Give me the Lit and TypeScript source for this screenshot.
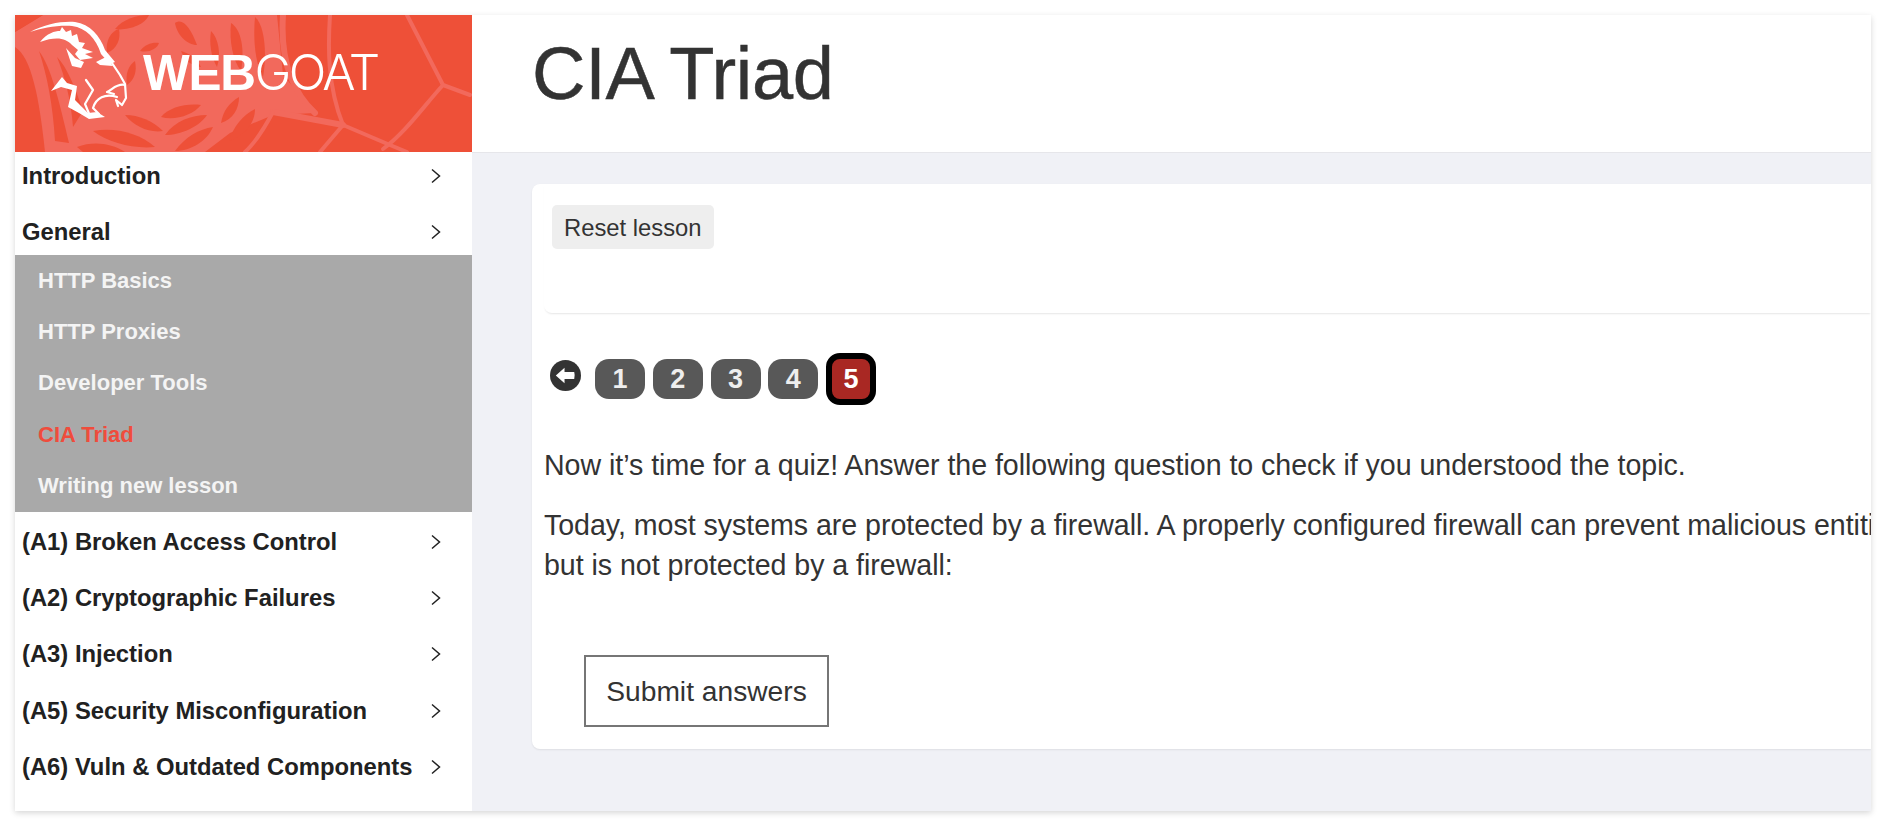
import { LitElement, html, css, svg } from "lit";
import { customElement } from "lit/decorators.js";

const L = "#f2695c";
const web = svg`
  <path fill="${L}" d="M0 17 L28 0 H262 L268 60 L300 98 L258 100 L215 118 L190 137 H0 Z"/>
  <g fill="none" stroke="${L}" stroke-linecap="round" stroke-linejoin="round">
    <path stroke-width="4" d="M392 0 L428 70 L455 80"/>
    <path stroke-width="4" d="M428 70 C408 92 390 118 368 134"/>
    <path stroke-width="4" d="M315 0 C313 30 312 70 328 110"/>
    <path stroke-width="4" d="M328 110 L305 137"/>
    <path stroke-width="4" d="M328 110 L375 130 L392 137"/>
    <path stroke-width="6" d="M258 97 L328 110"/>
    <path stroke-width="6" d="M268 0 C266 30 270 70 300 98"/>
    <path stroke-width="4" d="M230 137 C240 128 250 112 258 97"/>
  </g>
  <g fill="#ee5038">
    <path d="M0 32 C16 42 24 80 30 137 L0 137 Z"/>
    <path d="M24 36 C36 52 44 85 54 128 L40 126 C38 90 32 60 24 36 Z"/>
    <path d="M42 42 C52 52 60 72 68 96 L58 112 C56 85 50 62 42 42 Z"/>
    <path d="M0 0 H28 L0 17 Z"/>
    <path d="M100 14 C108 4 122 0 134 0 C130 10 112 16 100 14 Z"/>
    <path d="M92 38 C90 26 96 16 104 14 C106 24 102 34 92 38 Z"/>
    <path d="M125 36 C130 29 138 27 144 28 C142 34 134 38 125 36 Z"/>
    <path d="M160 8 C168 2 176 14 182 30 C172 30 162 20 160 8 Z"/>
    <path d="M166 36 C174 38 182 44 186 52 C178 52 170 46 166 36 Z"/>
    <path d="M112 70 C110 58 114 50 120 46 C122 56 120 64 112 70 Z"/>
    <path d="M216 8 C226 14 230 34 226 56 C218 46 214 26 216 8 Z"/>
    <path d="M240 2 C250 10 252 40 248 62 C240 48 238 24 240 2 Z"/>
    <path d="M196 16 C204 24 206 40 202 52 C196 42 194 28 196 16 Z"/>
    <path d="M146 102 C154 92 172 88 186 90 C178 100 160 106 146 102 Z"/>
    <path d="M150 120 C160 106 176 100 192 100 C184 112 166 120 150 120 Z"/>
    <path d="M160 136 C170 122 184 114 198 112 C192 126 176 136 160 136 Z"/>
    <path d="M206 108 C208 96 214 88 224 82 C224 94 218 104 206 108 Z"/>
    <path d="M214 126 C218 112 228 100 240 94 C240 108 230 120 214 126 Z"/>
    <path d="M110 100 C124 100 138 106 148 116 C134 118 120 112 110 100 Z"/>
    <path d="M78 116 C100 112 124 118 140 132 C118 134 94 128 78 116 Z"/>
    <path d="M62 132 C78 126 96 128 110 137 H68 Z"/>
  </g>`;

const goat = svg`
  <g fill="#fff">
    <path d="M30 32 C45 24 62 21 75 22 C90 24 100 36 105 50 L115 62 L110 64 L101 54 C96 38 86 28 72 26 C58 25 42 28 30 32 Z"/>
    <path d="M40 42 C47 33 55 31 60 31 L62 27 L66 32 L71 30 L72 36 L77 34 L79 42 L85 43 L82 48 L93 52 L85 54 L93 58 L80 60 L75 54 L78 50 L72 45 C66 38 56 36 40 42 Z"/>
    <path d="M66 48 L75 58 L84 62 L81 68 L72 66 Z"/>
    <path d="M96 62 L106 57 L113 66 L100 65 Z"/>
    <path d="M62 77 L51 91 L61 87 L72 90 L68 107 L79 113 L89 119 L105 117 L97 112 L88 113 L78 103 L75 100 L77 86 L67 83 Z"/>
  </g>
  <g fill="none" stroke="#fff" stroke-width="2.2" stroke-linejoin="round" stroke-linecap="round">
    <path d="M112 63 L120 75 L125 84 L126 98 L122 105 L116 100 L118 106"/>
    <path d="M125 85 C117 83 112 90 107 92 L114 94"/>
    <path d="M86 80 L93 90 L85 104 L90 116"/>
    <path d="M117 97 C105 93 96 98 93 108 L99 114"/>
  </g>`;

const icon = html`<svg class="chev" viewBox="0 0 16 16"><path d="M5 1.5 L12.5 8 L5 14.5" fill="none" stroke="#212121" stroke-width="1.5"/></svg>`;

@customElement("app-root")
export class AppRoot extends LitElement {
  static styles = css`
    :host { display: block; width: 1886px; height: 826px; background: #fff; overflow: hidden; font-family: "Liberation Sans", Arial, sans-serif; }
    * { box-sizing: border-box; }
    .outer { padding: 15px; height: 826px; }
    .win { display: flex; height: 796px; background: #fff; box-shadow: 0 2px 6px rgba(0,0,0,.16); overflow: hidden; }
    .side { width: 457px; flex: none; background: #fff; }
    .logo { height: 137px; background: #ee5038; position: relative; overflow: hidden; display: flex; align-items: center; padding-bottom: 24px; }
    .logo svg.bg { position: absolute; inset: 0; width: 457px; height: 137px; }
    .logo svg.goat { position: absolute; left: 0; top: 0; width: 140px; height: 137px; }
    .brand { position: relative; margin-left: 128px; font-size: 49.5px; color: #fff; letter-spacing: -1.3px; white-space: nowrap; }
    .brand b { font-weight: 700; }
    .brand span { font-family: Inter, "Liberation Sans", sans-serif; font-weight: 300; letter-spacing: -2.6px; }
    .item { height: 56.2px; padding-left: 7px; padding-right: 29px; display: flex; align-items: center; justify-content: space-between; font-size: 23.8px; font-weight: 700; color: #212121; white-space: nowrap; }
    .item.first { height: 48px; margin-bottom: 8px; }
    .item.gen { height: 47px; }
    .chev { width: 16px; height: 16px; flex: none; }
    .sub { background: #a9a9a9; padding-left: 23px; height: 257px; display: flex; flex-direction: column; margin-bottom: 2px; }
    .sub div { height: 51.4px; display: flex; align-items: center; font-size: 22px; font-weight: 700; color: #f4f4f4; }
    .sub div.on { color: #ef4c3c; }
    .main { flex: 1; min-width: 0; background: #f0f1f6; display: flex; flex-direction: column; }
    .head { height: 138px; background: #fff; border-bottom: 1px solid #e6e6ea; padding: 0 0 20px 60px; display: flex; align-items: center; }
    h1 { margin: 0; font-size: 74px; font-weight: 400; color: #333; letter-spacing: -0.3px; white-space: nowrap; -webkit-text-stroke: 0.5px #333; }
    .card { margin: 31px 0 0 60px; background: #fff; border-radius: 8px 0 0 8px; height: 565px; box-shadow: 0 1px 2px rgba(0,0,0,.08); overflow: hidden; }
    .panel { height: 129px; margin-left: 12px; border-radius: 0 0 0 8px; box-shadow: 0 2px 2px -1px rgba(0,0,0,.1); padding: 21px 0 0 8px; }
    .reset { display: inline-block; height: 44px; padding: 0 12px; line-height: 46px; background: #eee; border-radius: 5px; font-size: 23.8px; color: #333; }
    .pager { margin: 40px 0 0 18px; display: flex; align-items: center; gap: 7.75px; height: 52px; }
    .back { width: 31px; height: 31px; margin-right: 6.25px; margin-top: -7px; flex: none; }
    .pg { width: 50px; height: 40px; border-radius: 14px; background: #585858; color: #eee; font-size: 27px; font-weight: 700; display: flex; align-items: center; justify-content: center; }
    .pg.on { background: #a92823; color: #fff; border: 6px solid #000; height: 52px; border-radius: 14px; }
    .text { margin: 40px 0 0 12px; font-size: 28.6px; line-height: 40px; letter-spacing: -0.04px; color: #333; white-space: nowrap; }
    .text p { margin: 0 0 20px; }
    .submit { margin: 70px 0 0 52px; width: 245px; height: 72px; border: 2px solid #767676; font-size: 28.2px; color: #333; display: flex; align-items: center; justify-content: center; }
  `;

  render() {
    const top = ["(A1) Broken Access Control", "(A2) Cryptographic Failures", "(A3) Injection", "(A5) Security Misconfiguration", "(A6) Vuln & Outdated Components"];
    return html`<div class="outer"><div class="win">
      <aside class="side">
        <div class="logo">
          <svg class="bg" viewBox="0 0 457 137">${web}</svg>
          <svg class="goat" viewBox="15 15 140 137">${goat}</svg>
          <div class="brand"><b>WEB</b><span>GOAT</span></div>
        </div>
        <div class="item first">Introduction ${icon}</div>
        <div class="item gen">General ${icon}</div>
        <div class="sub">
          <div>HTTP Basics</div><div>HTTP Proxies</div><div>Developer Tools</div><div class="on">CIA Triad</div><div>Writing new lesson</div>
        </div>
        ${top.map((t) => html`<div class="item">${t} ${icon}</div>`)}
      </aside>
      <main class="main">
        <header class="head"><h1>CIA Triad</h1></header>
        <section class="card">
          <div class="panel"><span class="reset">Reset lesson</span></div>
          <div class="pager">
            <svg class="back" viewBox="0 0 32 32"><circle cx="16" cy="16" r="16" fill="#333"/><path d="M6 16 L15 8 V12.5 H25 Q26 16 25 19.5 H15 V24 Z" fill="#fff"/></svg>
            ${[1, 2, 3, 4].map((n) => html`<div class="pg">${n}</div>`)}
            <div class="pg on">5</div>
          </div>
          <div class="text">
            <p>Now it’s time for a quiz! Answer the following question to check if you understood the topic.</p>
            <p>Today, most systems are protected by a firewall. A properly configured firewall can prevent malicious entities<br>but is not protected by a firewall:</p>
          </div>
          <div class="submit">Submit answers</div>
        </section>
      </main>
    </div></div>`;
  }
}
